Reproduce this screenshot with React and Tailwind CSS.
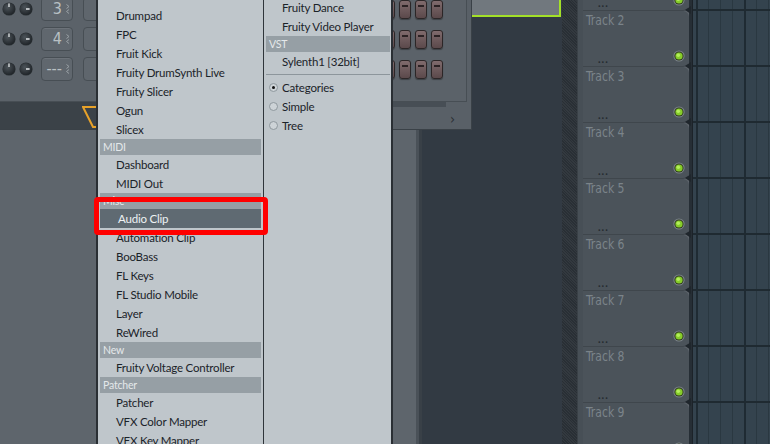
import React from 'react';

const UI = { fontFamily: 'Lato, "Noto Sans", sans-serif' };
const NARROW = { fontFamily: '"Liberation Sans Narrow", "DejaVu Sans Condensed", sans-serif' };

const MENU_LEFT = [
  ['i', 'Drumpad'],
  ['i', 'FPC'],
  ['i', 'Fruit Kick'],
  ['i', 'Fruity DrumSynth Live'],
  ['i', 'Fruity Slicer'],
  ['i', 'Ogun'],
  ['i', 'Slicex'],
  ['h', 'MIDI'],
  ['i', 'Dashboard'],
  ['i', 'MIDI Out'],
  ['h', 'Misc'],
  ['a', 'Audio Clip'],
  ['i', 'Automation Clip'],
  ['i', 'BooBass'],
  ['i', 'FL Keys'],
  ['i', 'FL Studio Mobile'],
  ['i', 'Layer'],
  ['i', 'ReWired'],
  ['h', 'New'],
  ['i', 'Fruity Voltage Controller'],
  ['h', 'Patcher'],
  ['i', 'Patcher'],
  ['i', 'VFX Color Mapper'],
  ['i', 'VFX Key Mapper'],
];

const CHANNELS = [
  { num: '3' },
  { num: '4' },
  { num: '---' },
];

function MenuRow({ kind, label, inset }) {
  if (kind === 'h') {
    return (
      <div className={`h-[16px] bg-[#969fa5] text-[10.5px] leading-[16px] tracking-[-0.2px] text-[#e4e8ea] ${inset}`}>
        <span className="pl-[3px]">{label}</span>
      </div>
    );
  }
  if (kind === 'a') {
    return (
      <div className={`h-[19px] bg-[#5f6a72] text-[11.5px] leading-[19px] tracking-[-0.2px] text-[#eef2f4] pl-[18px] ${inset}`}>
        {label}
      </div>
    );
  }
  return (
    <div className="h-[19px] text-[11.5px] leading-[19px] tracking-[-0.2px] text-[#1b2329] pl-[18px]">{label}</div>
  );
}

function Knob({ pan }) {
  return (
    <svg width="14" height="14" viewBox="0 0 14 14" className="shrink-0">
      <defs>
        <radialGradient id={pan ? 'kp' : 'kv'} cx="0.4" cy="0.35" r="0.7">
          <stop offset="0" stopColor="#4d545a" />
          <stop offset="1" stopColor="#1d2226" />
        </radialGradient>
      </defs>
      <circle cx="7" cy="7" r="6.6" fill="#2a3034" />
      <circle cx="7" cy="7" r="6" fill={`url(#${pan ? 'kp' : 'kv'})`} />
      {pan ? (
        <rect x="7" y="6.2" width="3.6" height="1.6" fill="#d6dadc" />
      ) : (
        <rect x="6.3" y="1.4" width="1.4" height="3.6" fill="#d6dadc" />
      )}
    </svg>
  );
}

function StepButton() {
  return (
    <div className="w-[12px] h-[19px] shrink-0 rounded-[3px] border border-[#2c2627] bg-gradient-to-b from-[#806b6d] to-[#5b494b] flex justify-center pt-[4px] shadow-[0_1px_1px_rgba(0,0,0,0.35)]">
      <div className="w-[6px] h-[2px] bg-[#2b2224]" />
    </div>
  );
}

function ChannelWindow() {
  return (
    <div className="absolute left-0 top-0 w-[472px] h-[130px] bg-[#596067] border-r border-b border-[#3a4147] overflow-hidden">
      <div className="w-[467px] h-[102px] bg-[#5b6269] border-r border-b border-[#474e54] overflow-hidden">
        <div className="-mt-[6px]">
          {CHANNELS.map((c, i) => (
            <div key={i} className="h-[30px] flex items-center">
              <div className="ml-[2px]"><Knob /></div>
              <div className="ml-[3px]"><Knob pan /></div>
              <div className="ml-[8px] w-[32px] h-[24px] shrink-0 rounded-[4px] border border-[#474e54] bg-[#60676e] flex items-center justify-end pr-[1px] shadow-[inset_0_1px_0_rgba(255,255,255,0.08)]">
                <span className="text-[16px] leading-none font-light text-[#b9c0c4]" style={NARROW}>{c.num}</span>
                <svg width="6" height="12" viewBox="0 0 6 12" className="ml-[3px] shrink-0">
                  <path d="M1.5 1.5 L4 3.5 L1.5 5.5" fill="none" stroke="#9aa1a6" strokeWidth="1" />
                  <path d="M4 6.5 L1.5 8.5 L4 10.5" fill="none" stroke="#9aa1a6" strokeWidth="1" />
                </svg>
              </div>
              <div className="ml-[10px] w-[60px] h-[24px] shrink-0 rounded-[4px] border border-[#474e54] bg-[#5f666d]" />
              <div className="ml-auto mr-[23px] flex gap-[4px]">
                {Array.from({ length: 10 }).map((_, k) => (
                  <StepButton key={k} />
                ))}
              </div>
            </div>
          ))}
        </div>
      </div>
      <div className="flex h-[28px]">
        <div className="relative w-[300px] h-full bg-[#3b4248]">
          <svg width="60" height="28" className="absolute left-[82px] top-0">
            <path d="M1 5 L58 5 L50 25 L11 25 Z" fill="none" stroke="#e8a229" strokeWidth="2" />
          </svg>
        </div>
        <div className="flex-1 flex flex-col">
          <div className="w-[146px] h-[8px] bg-[#474e55]" />
          <div className="flex-1 flex items-center justify-end pr-[16px] pt-[2px] text-[14px] text-[#2b3035]" style={NARROW}>›</div>
        </div>
      </div>
    </div>
  );
}

function Track({ n }) {
  return (
    <div className="relative h-[56px] shrink-0 bg-[#4b535a] rounded-r-[6px] border-b border-[#3f464c] flex flex-col">
      <div className="pl-[3px] pt-[1px] text-[14px] leading-[16px] text-[#7b848a]" style={NARROW}>
        <span className="inline-block origin-left scale-x-[0.86]">{`Track ${n}`}</span>
      </div>
      <div className="mt-auto flex items-end justify-between pl-[15px] pr-[4px] pb-[3px]">
        <span className="text-[11px] leading-[8px] font-bold tracking-[1px] text-[#252b30]">...</span>
        <svg width="12" height="12" viewBox="0 0 12 12" className="mb-[1px]">
          <circle cx="6" cy="6" r="5.6" fill="#7d858b" />
          <circle cx="6" cy="6" r="4.6" fill="#2e3a1c" />
          <circle cx="6" cy="6" r="3.6" fill="#86cc2a" />
          <circle cx="5.3" cy="5.2" r="1.8" fill="#b4ee5c" />
        </svg>
      </div>
      <div className="absolute -right-[2px] -bottom-[4px] w-0 h-0 border-y-[4px] border-y-transparent border-r-[6px] border-r-[#1f262c]" />
    </div>
  );
}

function GridRow() {
  const cells = [true, false, false, false, true, false, false];
  return (
    <div className="h-[56px] shrink-0 flex border-b-2 border-[#1f2a31]">
      <div className="w-[3px] shrink-0" />
      {cells.map((bar, i) => (
        <div
          key={i}
          className={`w-[12px] shrink-0 ${bar ? 'border-l-2 border-[#1f2b33]' : 'border-l border-[#2a3841]'}`}
        />
      ))}
    </div>
  );
}

export default function App() {
  const tracks = [1, 2, 3, 4, 5, 6, 7, 8, 9];
  return (
    <div className="relative w-[770px] h-[444px] overflow-hidden bg-[#5e656c]" style={UI}>
      {/* background: browser / playlist */}
      <div className="flex h-full">
        <div className="w-[416px] shrink-0 bg-[#5e656c]" />
        <div className="w-[6px] shrink-0 bg-[#4a5158] border-r-[3px] border-[#394047]" />
        <div className="w-[140px] shrink-0 bg-[#323a43]">
          <div className="w-[139px] h-[17px] border-2 border-t-0 border-[#a3e028] bg-[#71787e]" />
        </div>
        <div className="w-[15px] shrink-0 bg-[#2c3238] [background-image:repeating-linear-gradient(45deg,#292f35_0px,#292f35_1px,#33393f_1px,#33393f_2px)]" />
        <div className="w-[6px] shrink-0 bg-[#474f56] border-l border-[#3a4147]" />
        <div className="w-[106px] shrink-0 flex flex-col -mt-[45px]">
          {tracks.map(n => (
            <Track key={n} n={n} />
          ))}
        </div>
        <div className="w-[4px] shrink-0 bg-[#262e35] border-r border-[#1c2329]" />
        <div className="flex-1 bg-[#34434e] flex flex-col -mt-[45px] overflow-hidden">
          {tracks.map(n => (
            <GridRow key={n} />
          ))}
        </div>
      </div>

      <ChannelWindow />

      {/* plugin menu, left column */}
      <div className="absolute left-[96px] top-0 w-[168px] h-[444px] bg-[#bfc6cb] border-l-2 border-[#2a2f34] pt-[6px]">
        {MENU_LEFT.map(([kind, label], i) => (
          <MenuRow key={i} kind={kind} label={label} inset="ml-[2px] mr-[3px]" />
        ))}
      </div>

      {/* plugin menu, right column */}
      <div className="absolute left-[263px] top-0 w-[130px] h-[444px] bg-[#bfc6cb] border-l border-r-2 border-l-[#2f353a] border-r-[#2a2f34]">
        <div className="-mt-[2px]">
          <MenuRow kind="i" label="Fruity Dance" />
          <MenuRow kind="i" label="Fruity Video Player" />
          <MenuRow kind="h" label="VST" inset="ml-[2px] mr-[1px]" />
          <MenuRow kind="i" label="Sylenth1 [32bit]" />
          <div className="h-[7px] flex items-center pl-[2px] pr-[1px]">
            <div className="h-px w-full bg-[#8d969c]" />
          </div>
          {['Categories', 'Simple', 'Tree'].map((label, i) => (
            <div key={label} className="h-[19px] flex items-center text-[11.5px] tracking-[-0.2px] text-[#1b2329]">
              <div className="ml-[5px] w-[9px] h-[9px] rounded-full border border-[#8f989e] bg-[#cdd3d7] flex items-center justify-center">
                {i === 0 && <div className="w-[3px] h-[3px] rounded-full bg-[#111]" />}
              </div>
              <span className="ml-[4px]">{label}</span>
            </div>
          ))}
        </div>
      </div>

      {/* red callout */}
      <div className="absolute left-[94px] top-[197px] w-[174px] h-[38px] border-[5px] border-[#ff0000] rounded-[4px]" />
    </div>
  );
}
